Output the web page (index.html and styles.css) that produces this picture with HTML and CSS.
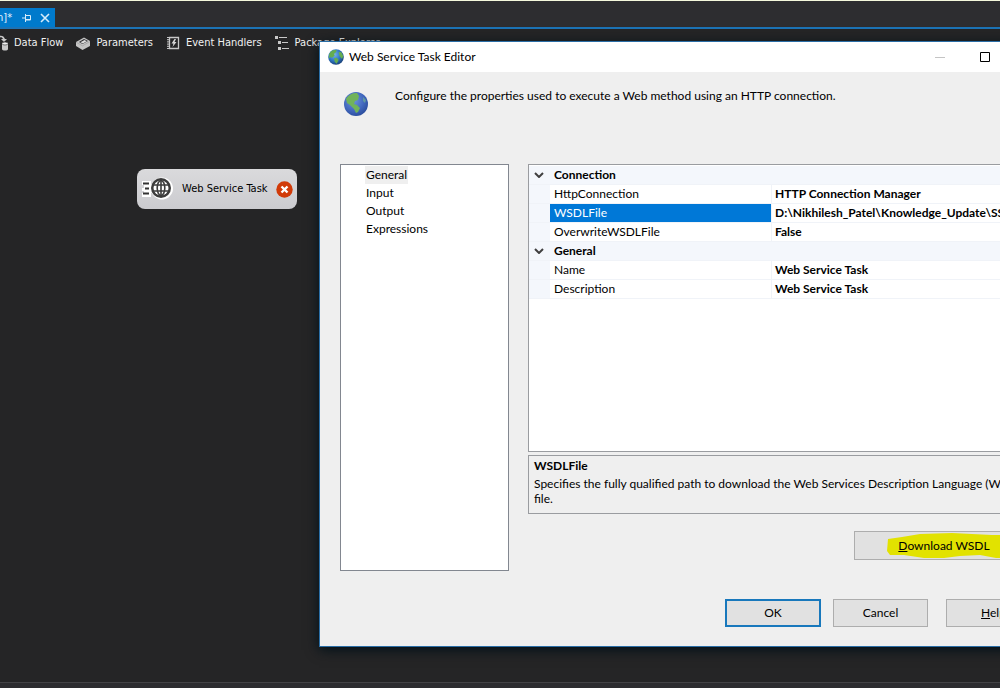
FILE: index.html
```html
<!DOCTYPE html>
<html lang="en">
<head>
<meta charset="utf-8">
<title>Web Service Task Editor</title>
<link rel="stylesheet" href="styles.css">
</head>
<body>
<div class="ide">
  <div class="doc-tabs">
    <div class="doc-tab">
      <span>n]*</span>
      <button class="tab-btn" type="button" aria-label="Pin tab"><svg width="9" height="8" viewBox="0 0 9 8" fill="none" stroke="#d6ecfa"><path d="M0 4h3M3.500 0v8M4 1.500h4.500v4.500H4M4 5.500h5"/></svg></button>
      <button class="tab-btn" type="button" aria-label="Close tab"><svg width="10" height="10" viewBox="0 0 10 10" fill="none" stroke="#d6ecfa" stroke-width="1.600"><path d="M1 1l8 8M9 1l-8 8"/></svg></button>
    </div>
  </div>
  <nav class="designer-tabs">
    <button class="designer-tab flow" type="button">
      <svg width="16" height="16" viewBox="0 0 16 16"><path d="M5 1c4-1 6 0 7 3l2 0-3 3-3-3h2c-1-2-2-2-5-1z" fill="#c8c8c8"/><path d="M9 8v6c0 2 6 2 6 0V8z" fill="#c8c8c8"/><ellipse cx="12" cy="8.500" rx="3" ry="1.500" fill="#f1f1f1" stroke="#252526" stroke-width=".6"/></svg>
      Data Flow</button>
    <button class="designer-tab" type="button">
      <svg width="16" height="16" viewBox="0 0 16 16"><path d="M1 7l8-4.500 6 3.500v5L7.500 15 1 11z" fill="#c4c4c4"/><path d="M1 7.200l6.500 3.600L15 6.500" fill="none" stroke="#999" stroke-width=".6"/><path d="M4 7l5-3 4 2-5.500 3z" fill="#2d2d30"/><path d="M5.500 7.300l4-2.300 2.300 1.200-4 2.200z" fill="#dedede"/></svg>
      Parameters</button>
    <button class="designer-tab" type="button">
      <svg width="16" height="16" viewBox="0 0 16 16"><path d="M4.500 2.500h9v11h-9z" fill="none" stroke="#c8c8c8" stroke-width="1.300"/><path d="M2 2.500h3M2 4.700h3M2 6.900h3M2 9.100h3M2 11.300h3M2 13.500h3" stroke="#c8c8c8"/><path d="M9.500 4L6.500 8.500h2L7.500 12l4-5h-2l1.500-3z" fill="#d8d8d8"/></svg>
      Event Handlers</button>
    <button class="designer-tab" type="button">
      <svg width="16" height="16" viewBox="0 0 16 16" fill="#c8c8c8"><path d="M1 1h3v3H1zM5 2h8v1H5zM4 6h3v3H4zM8 7h6v1H8zM4 12h3v3H4zM8 13h7v1H8z"/></svg>
      Package Explorer</button>
  </nav>
  <main class="canvas"></main>
  <footer class="status"></footer>

  <div class="task">
    <svg width="32" height="28" viewBox="0 0 32 28"><path d="M1 6h9v3h1a11 11 0 1 1 0 9h-1v4H1v-4h2v-2H1v-3h2v-3H1z" fill="#fff"/><path d="M2 8.500h6M4 13.500h4M2 18.500h6" stroke="#333" stroke-width="2"/><circle cx="20" cy="13" r="10" fill="#3c3c3c"/><circle cx="20" cy="13" r="7.500" fill="#fff"/><g fill="none" stroke="#3c3c3c" stroke-width="1.600"><ellipse cx="20" cy="13" rx="3.800" ry="7.500"/><path d="M20 5v16M12 10h16M12 16h16"/></g></svg>
    <span class="task-name">Web Service Task</span>
    <svg width="17" height="17" viewBox="0 0 17 17"><circle cx="8.500" cy="8.500" r="8.200" fill="#d13a08"/><path d="M5.500 5.500l6 6M11.500 5.500l-6 6" stroke="#fff" stroke-width="2.400"/></svg>
  </div>

  <section class="dialog" role="dialog" aria-labelledby="dialog-title">
    <header class="titlebar">
      <svg width="16" height="16" viewBox="0 0 24 24"><defs><radialGradient id="sea" cx=".4" cy=".35" r=".7"><stop offset="0" stop-color="#78b5ea"/><stop offset=".55" stop-color="#2f76c4"/><stop offset="1" stop-color="#173b70"/></radialGradient></defs><circle cx="12" cy="12" r="11.700" fill="url(#sea)"/><path d="M2 7c3-5 7-6 11-5l-1 3-3 2 1 3-4 3-2-1-3 2zM9 14l4-1 3 3-3 6-3-3zM16 4l4 1 3 6-2 4-4-5z" fill="#65ad50"/></svg>
      <h1 id="dialog-title">Web Service Task Editor</h1>
      <div class="window-buttons">
        <button type="button" aria-label="Minimize"><svg width="10" height="10"><path d="M0 5.500h10" stroke="#c4c4c4"/></svg></button>
        <button type="button" aria-label="Maximize"><svg width="10" height="10"><path d="M.5.500h9v9h-9z" fill="none" stroke="#000"/></svg></button>
        <button type="button" aria-label="Close"><svg width="10" height="10"><path d="M0 0l10 10M10 0L0 10" stroke="#000"/></svg></button>
      </div>
    </header>
    <div class="intro">
      <svg width="24" height="24" viewBox="0 0 24 24"><defs><radialGradient id="ocean" cx=".4" cy=".35" r=".7"><stop offset="0" stop-color="#6d95dc"/><stop offset=".6" stop-color="#4268be"/><stop offset="1" stop-color="#294b9a"/></radialGradient></defs><circle cx="12" cy="12" r="12" fill="url(#ocean)"/><path d="M2 7c3-5 7-6 11-6l2 3-1 4-3 1-1 3 3 1 3 3-2 4-2 1-2-4-4-4-3-2z" fill="#71b35a"/><path d="M19 5l3 3-1 3-2-2z" fill="#5f98a0"/></svg>
      <p>Configure the properties used to execute a Web method using an HTTP connection.</p>
    </div>
    <div class="body">
      <nav class="pages">
        <button class="page current" type="button">General</button>
        <button class="page" type="button">Input</button>
        <button class="page" type="button">Output</button>
        <button class="page" type="button">Expressions</button>
      </nav>
      <div class="settings">
        <div class="grid-box">
          <table class="props">
            <colgroup><col class="col-gutter"><col class="col-name"><col></colgroup>
            <tbody>
              <tr class="group"><td><svg width="10" height="6" viewBox="0 0 10 6"><path d="M1 1l4 4 4-4"/></svg></td><th colspan="2">Connection</th></tr>
              <tr><td></td><th>HttpConnection</th><td>HTTP Connection Manager</td></tr>
              <tr class="selected"><td></td><th>WSDLFile</th><td>D:\Nikhilesh_Patel\Knowledge_Update\SSIS</td></tr>
              <tr><td></td><th>OverwriteWSDLFile</th><td>False</td></tr>
              <tr class="group"><td><svg width="10" height="6" viewBox="0 0 10 6"><path d="M1 1l4 4 4-4"/></svg></td><th colspan="2">General</th></tr>
              <tr><td></td><th>Name</th><td>Web Service Task</td></tr>
              <tr><td></td><th>Description</th><td>Web Service Task</td></tr>
            </tbody>
          </table>
        </div>
        <div class="help">
          <h2>WSDLFile</h2>
          <p>Specifies the fully qualified path to download the Web Services Description Language (WSDL) file.</p>
        </div>
        <button class="btn download" type="button">
          <svg class="marker" width="150" height="27" viewBox="0 0 150 27"><path d="M1 6l14-2 18-3 32-1 40 2 44 0v24l-40-1-16-3-20 1-16 2-20 0-20-3-14 0-3-4z" fill="#e2e200"/></svg>
          <span class="label"><u>D</u>ownload WSDL</span>
        </button>
      </div>
    </div>
    <footer class="actions">
      <button class="btn primary" type="button">OK</button>
      <button class="btn" type="button">Cancel</button>
      <button class="btn help-btn" type="button"><span><u>H</u>elp</span></button>
    </footer>
  </section>
</div>
</body>
</html>
```

FILE: styles.css
```css
* { box-sizing: border-box; }

body {
  margin: 0;
  font: 11px/16px "DejaVu Sans Condensed", sans-serif;
  color: #000;
}

h1, h2, p { margin: 0; font-size: inherit; }
h1 { font-weight: normal; }

button {
  font: inherit;
  color: inherit;
  border: 0;
  padding: 0;
  background: none;
}

svg { display: block; flex: none; }

.ide {
  position: relative;
  display: flex;
  flex-direction: column;
  height: 100vh;
  overflow: hidden;
  background: #252526;
}

.doc-tabs {
  display: flex;
  align-items: flex-end;
  height: 29px;
  flex: none;
  background: #2d2d30;
  border-top: 1px solid #f5f8dc;
  border-bottom: 2px solid #1c73b5;
}

.doc-tab {
  display: flex;
  align-items: center;
  height: 19px;
  padding-right: 5px;
  color: #e4f2fc;
  background: #007acc;
}

.doc-tab span { margin-left: -3px; margin-right: 10px; }
.tab-btn { margin-right: 9px; }
.tab-btn:last-child { margin-right: 0; }

.designer-tabs {
  display: flex;
  align-items: center;
  gap: 12px;
  height: 28px;
  flex: none;
  color: #f1f1f1;
}

.designer-tab {
  display: flex;
  align-items: center;
  gap: 5px;
  white-space: nowrap;
}

.flow { margin-left: -7px; }
.canvas { flex: 1; }

.status {
  height: 6px;
  flex: none;
  background: #2d2d30;
  border-top: 1px solid #434346;
}

.task {
  position: absolute;
  left: 137px;
  top: 169px;
  display: flex;
  align-items: center;
  width: 160px;
  height: 40px;
  padding: 0 4px;
  border-radius: 8px;
  background: linear-gradient(#dadadc, #cbcbcf);
}

.task-name { flex: 1; padding-left: 9px; white-space: nowrap; }

.dialog {
  position: absolute;
  left: 319px;
  right: -53px;
  top: 41px;
  bottom: 41px;
  display: flex;
  flex-direction: column;
  font: 12px/16px Lato, sans-serif;
  background: #efefef;
  border: 1px solid #2a6ea6;
  box-shadow: 0 3px 12px #001018;
}

.titlebar {
  display: flex;
  align-items: center;
  height: 30px;
  flex: none;
  padding-left: 8px;
  gap: 5px;
  background: #fff;
}

.window-buttons { display: flex; margin-left: auto; }

.window-buttons button {
  display: grid;
  place-items: center;
  width: 45px;
  height: 30px;
}

.intro {
  display: flex;
  gap: 27px;
  height: 92px;
  flex: none;
  padding: 20px 24px;
}

.intro p { margin-top: -4px; }

.body {
  display: flex;
  flex: 1;
  gap: 19px;
  padding: 0 18px 0 20px;
}

.pages {
  width: 169px;
  flex: none;
  display: flex;
  flex-direction: column;
  align-items: flex-start;
  padding: 1px 0 0 24px;
  border: 1px solid #828790;
  background: #fff;
}

.page { height: 18px; padding: 0 1px; }
.current { background: #efefef; }

.settings {
  flex: 1;
  min-width: 0;
  display: flex;
  flex-direction: column;
  padding-bottom: 11px;
}

.grid-box {
  flex: 1;
  overflow: hidden;
  padding-top: 1px;
  border: 1px solid #9a9ca0;
  background: #fff;
}

.props {
  width: 100%;
  table-layout: fixed;
  border-spacing: 0;
}

.col-gutter { width: 21px; }
.col-name { width: 222px; }

.props tr { height: 19px; }

.props td, .props th {
  padding: 0 4px;
  border-bottom: 1px solid #f0f3f8;
  line-height: 18px;
  text-align: left;
  white-space: nowrap;
  overflow: hidden;
}

.props th { font-weight: normal; border-right: 1px solid #f0f3f8; }
.props td { font-weight: bold; padding: 0 3px; }
.props td:first-child { background: #f4f7fc; padding: 0 5px; }
.props .group th { font-weight: bold; background: #f4f7fc; }
.props .selected th { color: #fff; background: #0078d7 padding-box; }
.props path { fill: none; stroke: #404040; stroke-width: 2; }

.help {
  height: 59px;
  flex: none;
  margin-top: 3px;
  padding: 2px 5px;
  border: 1px solid #9a9ca0;
}

.help p { margin-top: 2px; line-height: 15px; }

.btn {
  display: flex;
  align-items: center;
  justify-content: center;
  width: 95px;
  height: 28px;
  border: 1px solid #adadad;
  background: #e1e1e1;
}

.download {
  position: relative;
  align-self: flex-end;
  width: 180px;
  height: 29px;
  flex: none;
  margin-top: 17px;
}

.marker { position: absolute; left: 32px; top: 1px; }
.label { position: relative; }

.primary { width: 96px; border: 2px solid #1878bc; }
.help-btn { margin-left: 6px; }

.actions {
  display: flex;
  justify-content: flex-end;
  gap: 12px;
  flex: none;
  padding: 28px 11px 19px;
}
```
